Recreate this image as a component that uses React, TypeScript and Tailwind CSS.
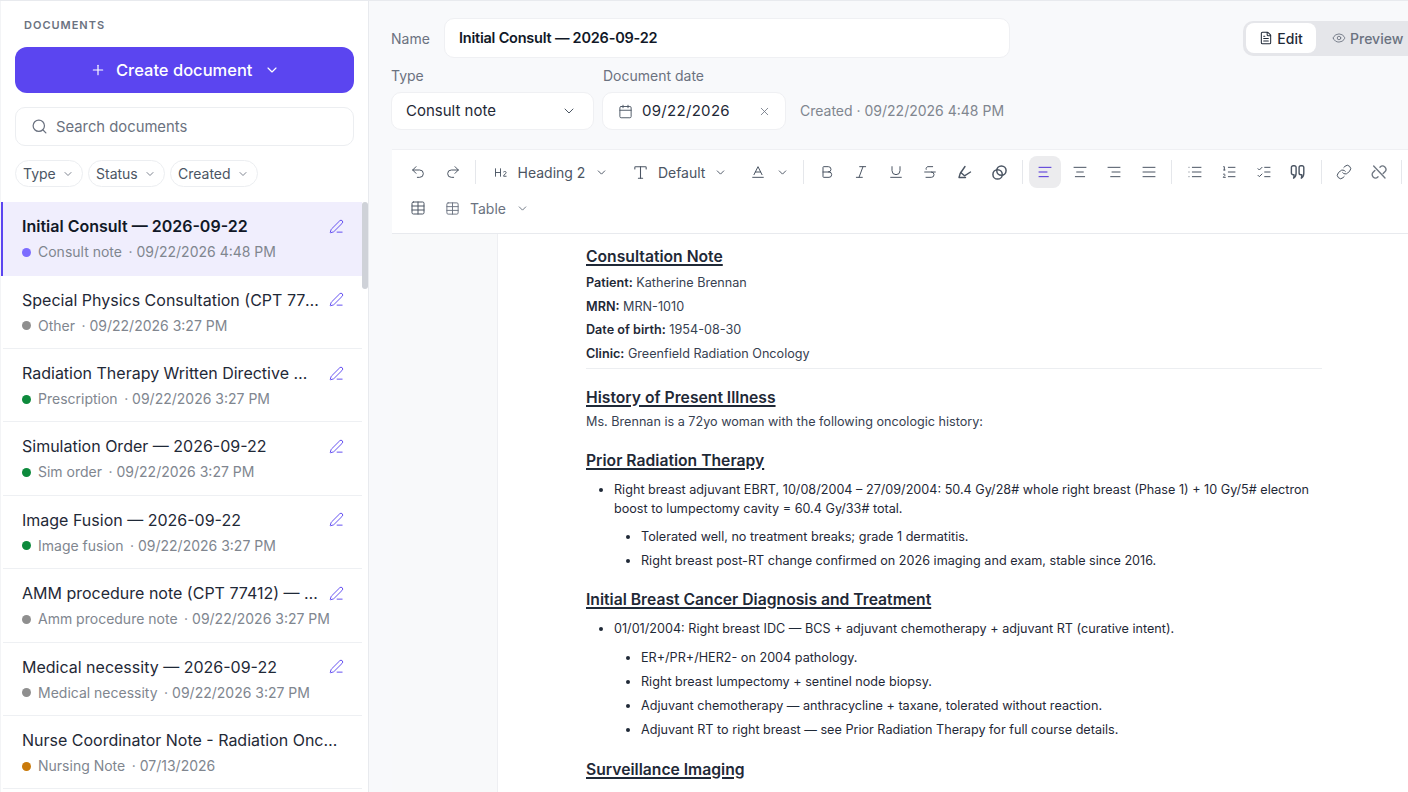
import {
  AlignCenter,
  AlignJustify,
  AlignLeft,
  AlignRight,
  Baseline,
  Bold,
  Calendar,
  ChevronDown,
  Eye,
  FileText,
  Heading2,
  Italic,
  Link,
  List,
  ListChecks,
  ListOrdered,
  PenLine,
  Plus,
  Redo2,
  Search,
  Strikethrough,
  Table,
  Type,
  Underline,
  Undo2,
  X,
} from "lucide-react";
import type { ReactNode } from "react";

const docs = [
  { title: "Initial Consult — 2026-09-22", type: "Consult note", date: "09/22/2026 4:48 PM", dot: "bg-[#7c6cff]", active: true, edit: true },
  { title: "Special Physics Consultation (CPT 77370) — 2026-09-22", type: "Other", date: "09/22/2026 3:27 PM", dot: "bg-[#8f8f8f]", edit: true },
  { title: "Radiation Therapy Written Directive — 2026-09-22", type: "Prescription", date: "09/22/2026 3:27 PM", dot: "bg-[#0d8a3c]", edit: true },
  { title: "Simulation Order — 2026-09-22", type: "Sim order", date: "09/22/2026 3:27 PM", dot: "bg-[#0d8a3c]", edit: true },
  { title: "Image Fusion — 2026-09-22", type: "Image fusion", date: "09/22/2026 3:27 PM", dot: "bg-[#0d8a3c]", edit: true },
  { title: "AMM procedure note (CPT 77412) — 2026-09-22", type: "Amm procedure note", date: "09/22/2026 3:27 PM", dot: "bg-[#8f8f8f]", edit: true },
  { title: "Medical necessity — 2026-09-22", type: "Medical necessity", date: "09/22/2026 3:27 PM", dot: "bg-[#8f8f8f]", edit: true },
  { title: "Nurse Coordinator Note - Radiation Oncology — 2026", type: "Nursing Note", date: "07/13/2026", dot: "bg-[#c97a0a]", edit: false },
];

function DocRow({ doc }: { doc: (typeof docs)[number] }) {
  return (
    <div
      className={`flex h-[73.4px] shrink-0 flex-col pr-[18px] pt-[12px] ${
        doc.active ? "border-l-2 border-l-[#5b45f0] bg-[#f0eefd] pl-[19px]" : "ml-[2px] border-b border-[#eef0f3] pl-[19px]"
      }`}
    >
      <div className="flex items-center gap-[8px]">
        <span className={`min-w-0 flex-1 truncate text-[16px] leading-[24px] ${doc.active ? "font-semibold text-[#111827]" : "text-[#1f2937]"}`}>
          {doc.title}
        </span>
        {doc.edit && <PenLine size={15} strokeWidth={1.5} className="shrink-0 text-[#5b45f0]" />}
      </div>
      <div className="mt-[3px] flex items-center whitespace-nowrap text-[14px] leading-[22px] text-[#80868f]">
        <span className={`mr-[7px] h-[9px] w-[9px] rounded-full ${doc.dot}`} />
        <span>{doc.type}</span>
        <span className="ml-[6.5px]">· {doc.date}</span>
      </div>
    </div>
  );
}

function FilterChip({ label, width }: { label: string; width: string }) {
  return (
    <div className={`flex h-[27px] items-center justify-between rounded-full border border-[#eceef1] bg-white pl-[7px] pr-[8px] text-[14px] text-[#4b5563] ${width}`}>
      <span>{label}</span>
      <ChevronDown size={12} strokeWidth={1.75} className="text-[#6b7280]" />
    </div>
  );
}

function Sidebar() {
  return (
    <aside className="relative flex h-full w-[368px] shrink-0 flex-col overflow-hidden border-r border-[#e8eaee] bg-white">
      <div className="pl-[14px] pr-[14px]">
        <div className="pl-[9px] pt-[17px] text-[11px] font-semibold leading-[14px] tracking-[0.09em] text-[#6b7280]">DOCUMENTS</div>
        <button className="mt-[15px] flex h-[46px] w-[339px] items-center justify-center gap-[10px] rounded-[12px] bg-[#5b45f0] pl-[1.5px] text-[16.5px] font-medium text-white">
          <Plus size={16} strokeWidth={1.75} />
          <span>Create document</span>
          <ChevronDown size={16} strokeWidth={1.75} className="ml-[2px]" />
        </button>
        <div className="mt-[14px] flex h-[39px] w-[339px] items-center gap-[8px] rounded-[10px] border border-[#eceef1] bg-white pl-[15px] text-[14.8px] text-[#6b7280]">
          <Search size={17} strokeWidth={1.75} />
          <span className="pt-[2px]">Search documents</span>
        </div>
        <div className="mt-[14px] flex gap-[5px]">
          <FilterChip label="Type" width="w-[68px]" />
          <FilterChip label="Status" width="w-[77px]" />
          <FilterChip label="Created" width="w-[88px]" />
        </div>
      </div>
      <div className="mt-[15.3px] flex flex-col pr-[6px]">
        {docs.map((d) => (
          <DocRow key={d.title} doc={d} />
        ))}
      </div>
      <div className="absolute right-[0px] top-[201px] h-[87px] w-[6px] rounded-full bg-[#cfd2d8]" />
    </aside>
  );
}

function Field({ children, className }: { children: ReactNode; className: string }) {
  return <div className={`flex h-[38px] items-center rounded-[10px] border border-[#eff0f3] bg-white text-[15px] text-[#1f2937] ${className}`}>{children}</div>;
}

function Sep() {
  return <span className="mx-[4px] h-[24px] w-px shrink-0 bg-[#e5e7eb]" />;
}

function Tool({ children, active }: { children: ReactNode; active?: boolean }) {
  return (
    <span className={`flex h-[32px] w-[32px] shrink-0 items-center justify-center rounded-[8px] ${active ? "bg-[#ececee] text-[#4f2fd8]" : "text-[#4b5563]"}`}>
      {children}
    </span>
  );
}

function Toolbar() {
  const s = { size: 16, strokeWidth: 1.5 };
  return (
    <div className="flex h-[84px] w-[1040px] shrink-0 flex-col border-b border-[#e8eaee] bg-white pl-[10px] pt-[6px]">
      <div className="flex h-[32px] items-center gap-[2.5px]">
        <Tool><Undo2 {...s} /></Tool>
        <Tool><Redo2 {...s} /></Tool>
        <Sep />
        <span className="flex items-center gap-[10px] pl-[10px] pr-[4px] text-[14px] text-[#4b5563]">
          <Heading2 size={15} strokeWidth={1.5} />
          <span>Heading 2</span>
          <ChevronDown size={13} strokeWidth={1.75} />
        </span>
        <span className="flex items-center gap-[9px] pl-[17px] pr-[4px] text-[14px] text-[#4b5563]">
          <Type size={17} strokeWidth={1.5} />
          <span>Default</span>
          <ChevronDown size={13} strokeWidth={1.75} />
        </span>
        <span className="flex items-center gap-[10px] pl-[16px] pr-[8px] text-[#4b5563]">
          <Baseline {...s} />
          <ChevronDown size={13} strokeWidth={1.75} />
        </span>
        <Sep />
        <Tool><Bold {...s} /></Tool>
        <Tool><Italic {...s} /></Tool>
        <Tool><Underline {...s} /></Tool>
        <Tool><Strikethrough {...s} /></Tool>
        <Tool>
          <svg width="16" height="16" viewBox="0 0 16 16" fill="none" stroke="currentColor" strokeWidth="1.4" strokeLinecap="round" strokeLinejoin="round">
            <path d="M8 2.5 3.2 9.5 2 13.5h6.5" />
            <path d="M3.8 8.5 7.5 11.8 13.5 8" />
          </svg>
        </Tool>
        <Tool>
          <svg width="17" height="17" viewBox="0 0 16 16" fill="none" stroke="currentColor" strokeWidth="1.4">
            <circle cx="6.2" cy="9.8" r="4.4" />
            <circle cx="9.8" cy="6.2" r="4.4" />
          </svg>
        </Tool>
        <Sep />
        <Tool active><AlignLeft {...s} /></Tool>
        <Tool><AlignCenter {...s} /></Tool>
        <Tool><AlignRight {...s} /></Tool>
        <Tool><AlignJustify {...s} /></Tool>
        <Sep />
        <Tool><List {...s} /></Tool>
        <Tool><ListOrdered {...s} /></Tool>
        <Tool><ListChecks {...s} /></Tool>
        <Tool>
          <svg width="16" height="16" viewBox="0 0 16 16" fill="none" stroke="currentColor" strokeWidth="1.4" strokeLinejoin="round">
            <path d="M3.2 1.8h1.2A1.7 1.7 0 0 1 6.1 3.5v5.7c0 2.3-.8 3.9-2.5 5 .5-1.3.6-2.4.4-3.5h-.8A1.8 1.8 0 0 1 1.4 8.9V3.6a1.8 1.8 0 0 1 1.8-1.8Z" />
            <path d="M10.9 1.8h1.2a1.7 1.7 0 0 1 1.7 1.7v5.7c0 2.3-.8 3.9-2.5 5 .5-1.3.6-2.4.4-3.5h-.8a1.8 1.8 0 0 1-1.8-1.8V3.6a1.8 1.8 0 0 1 1.8-1.8Z" />
          </svg>
        </Tool>
        <Sep />
        <Tool><Link {...s} /></Tool>
        <Tool>
          <svg width="16" height="16" viewBox="0 0 24 24" fill="none" stroke="currentColor" strokeWidth="2" strokeLinecap="round" strokeLinejoin="round" className="opacity-80">
            <path d="M13.5 4.8l.2-.2a5 5 0 0 1 7.1 7.1l-2.6 2.6" />
            <path d="M10.5 19.2l-.2.2a5 5 0 0 1-7.1-7.1l2.6-2.6" />
            <path d="M4 3l17 18" />
          </svg>
        </Tool>
        <Sep />
      </div>
      <div className="mt-[4px] flex h-[32px] items-center">
        <Tool><Table {...s} /></Tool>
        <span className="flex items-center gap-[10px] pl-[11px] text-[14px] text-[#6b7280]">
          <Table size={15} strokeWidth={1.5} />
          <span>Table</span>
          <ChevronDown size={13} strokeWidth={1.75} />
        </span>
      </div>
    </div>
  );
}

function H({ children, className }: { children: ReactNode; className: string }) {
  return <h2 className={`text-[15.7px] font-semibold leading-[22px] text-[#1f2937] underline decoration-[1.5px] underline-offset-2 ${className}`}>{children}</h2>;
}

function P({ label, value }: { label: string; value: string }) {
  return (
    <p className="text-[12.63px] leading-[23.7px] text-[#374151]">
      <strong className="font-semibold text-[#1f2937]">{label}</strong> {value}
    </p>
  );
}

function Bullets({ items, sub, className }: { items: string[]; sub?: boolean; className?: string }) {
  return (
    <ul className={`${sub ? "pl-[55px]" : "pl-[28px]"} list-disc text-[12.63px] leading-[19px] text-[#1f2937] ${className ?? ""}`}>
      {items.map((t) => (
        <li key={t} className="mb-[5px]">{t}</li>
      ))}
    </ul>
  );
}

function Note() {
  return (
    <div className="flex min-h-0 w-[1040px] flex-1">
      <div className="w-[106px] shrink-0 border-r border-[#eeeff2] bg-[#f8f9fa]" />
      <div className="flex-1 overflow-hidden bg-white pl-[88px] pr-[110px] pt-[12px]">
        <H className="">Consultation Note</H>
        <div className="mt-[3px]">
          <P label="Patient:" value="Katherine Brennan" />
          <P label="MRN:" value="MRN-1010" />
          <P label="Date of birth:" value="1954-08-30" />
          <P label="Clinic:" value="Greenfield Radiation Oncology" />
        </div>
        <hr className="mt-[2px] border-[#eceef1]" />
        <H className="mt-[18px]">History of Present Illness</H>
        <p className="mt-[1px] text-[12.63px] leading-[23.7px] text-[#374151]">Ms. Brennan is a 72yo woman with the following oncologic history:</p>
        <H className="mt-[16px]">Prior Radiation Therapy</H>
        <Bullets
          className="mt-[8px]"
          items={["Right breast adjuvant EBRT, 10/08/2004 – 27/09/2004: 50.4 Gy/28# whole right breast (Phase 1) + 10 Gy/5# electron boost to lumpectomy cavity = 60.4 Gy/33# total."]}
        />
        <Bullets
          sub
          className="mt-[9px]"
          items={["Tolerated well, no treatment breaks; grade 1 dermatitis.", "Right breast post-RT change confirmed on 2026 imaging and exam, stable since 2016."]}
        />
        <H className="mt-[19px]">Initial Breast Cancer Diagnosis and Treatment</H>
        <Bullets className="mt-[8px]" items={["01/01/2004: Right breast IDC — BCS + adjuvant chemotherapy + adjuvant RT (curative intent)."]} />
        <Bullets
          sub
          className="mt-[10px]"
          items={[
            "ER+/PR+/HER2- on 2004 pathology.",
            "Right breast lumpectomy + sentinel node biopsy.",
            "Adjuvant chemotherapy — anthracycline + taxane, tolerated without reaction.",
            "Adjuvant RT to right breast — see Prior Radiation Therapy for full course details.",
          ]}
        />
        <H className="mt-[20px]">Surveillance Imaging</H>
      </div>
    </div>
  );
}

export default function App() {
  return (
    <div className="flex h-[792px] w-[1408px] overflow-hidden border-t border-[#e8eaee] bg-[#f3f4f6] pl-[1px] font-['Inter',sans-serif]">
      <Sidebar />
      <main className="flex min-w-0 flex-1 flex-col overflow-hidden bg-[#f8f9fb] pl-[22px]">
        <div className="mt-[17px] flex h-[40px] items-center">
          <span className="w-[53px] shrink-0 text-[14px] text-[#6b7280]">Name</span>
          <div className="flex h-[40px] w-[566px] shrink-0 items-center rounded-[10px] border border-[#eff0f3] bg-white pl-[14px] text-[14.5px] font-semibold tracking-[-0.015em] text-[#111827]">
            Initial Consult — 2026-09-22
          </div>
          <div className="ml-[233px] flex h-[35px] w-[200px] shrink-0 items-center rounded-[10px] bg-[#e5e6ea] pl-[3px]">
            <span className="flex h-[30px] w-[70px] items-center justify-center gap-[4px] rounded-[8px] bg-white text-[14px] font-medium text-[#1f2937]">
              <FileText size={14} strokeWidth={1.75} />
              Edit
            </span>
            <span className="ml-[16px] flex items-center gap-[4px] whitespace-nowrap text-[14px] font-medium text-[#6b7280]">
              <Eye size={14} strokeWidth={1.5} />
              Preview
            </span>
          </div>
        </div>
        <div className="mt-[9px] flex items-end gap-[8px]">
          <div>
            <div className="mb-[7px] text-[14px] leading-[18px] text-[#6b7280]">Type</div>
            <Field className="w-[203px] justify-between pl-[14px] pr-[16px]">
              Consult note
              <ChevronDown size={16} strokeWidth={1.5} className="text-[#4b5563]" />
            </Field>
          </div>
          <div>
            <div className="mb-[7px] pl-[1px] text-[14px] leading-[18px] text-[#6b7280]">Document date</div>
            <Field className="w-[184px] pl-[15px] pr-[14px]">
              <Calendar size={15} strokeWidth={1.5} className="text-[#4b5563]" />
              <span className="ml-[9px] flex-1 tracking-[0.02em]">09/22/2026</span>
              <X size={13} strokeWidth={1.5} className="text-[#6b7280]" />
            </Field>
          </div>
          <span className="ml-[6px] h-[38px] text-[14px] leading-[38px] text-[#80868f]">Created · 09/22/2026 4:48 PM</span>
        </div>
        <div className="ml-[1px] mt-[19px] flex min-h-0 flex-1 flex-col overflow-hidden border-t border-[#eff0f3]">
          <Toolbar />
          <Note />
        </div>
      </main>
    </div>
  );
}
